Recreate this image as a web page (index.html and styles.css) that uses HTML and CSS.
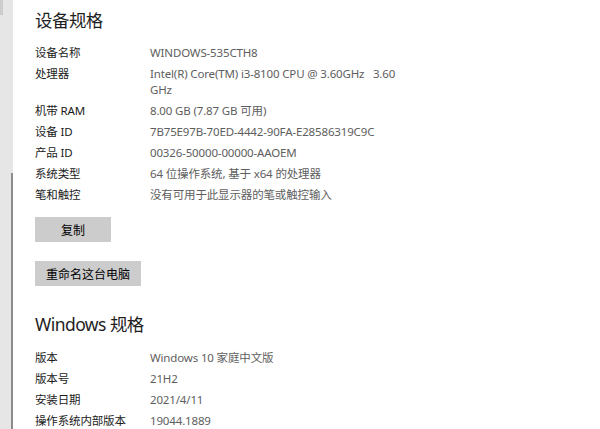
FILE: index.html
```html
<!DOCTYPE html>
<html lang="zh-CN">
<head>
<meta charset="utf-8">
<title>关于</title>
<link rel="stylesheet" href="styles.css">
</head>
<body>
<div class="page">
	<aside class="rail">
		<span class="rail-thumb"></span>
		<span class="rail-line"></span>
	</aside>
	<main class="content">
		<h2>设备规格</h2>
		<dl class="specs">
			<dt>设备名称</dt><dd>WINDOWS-535CTH8</dd>
			<dt>处理器</dt><dd>Intel(R) Core(TM) i3-8100 CPU @ 3.60GHz&nbsp;&nbsp; 3.60 GHz</dd>
			<dt>机带 RAM</dt><dd>8.00 GB (7.87 GB 可用)</dd>
			<dt>设备 ID</dt><dd>7B75E97B-70ED-4442-90FA-E28586319C9C</dd>
			<dt>产品 ID</dt><dd>00326-50000-00000-AAOEM</dd>
			<dt>系统类型</dt><dd>64 位操作系统, 基于 x64 的处理器</dd>
			<dt>笔和触控</dt><dd>没有可用于此显示器的笔或触控输入</dd>
		</dl>
		<button class="btn btn-copy">复制</button>
		<button class="btn">重命名这台电脑</button>
		<h2 class="second">Windows 规格</h2>
		<dl class="specs">
			<dt>版本</dt><dd>Windows 10 家庭中文版</dd>
			<dt>版本号</dt><dd>21H2</dd>
			<dt>安装日期</dt><dd>2021/4/11</dd>
			<dt>操作系统内部版本</dt><dd>19044.1889</dd>
		</dl>
	</main>
</div>
</body>
</html>
```

FILE: styles.css
```css
html, body {
	margin: 0;
	padding: 0;
	background: #fff;
	height: 100%;
	overflow: hidden;
}
body {
	font-family: "Noto Sans", "Noto Sans CJK SC", sans-serif;
	color: #1b1b1b;
}
.page {
	display: flex;
	height: 100%;
}
.rail {
	width: 13px;
	flex-shrink: 0;
	background: #e6e6e6;
	display: flex;
	flex-direction: column;
}
.rail-thumb {
	width: 3px;
	height: 15px;
	background: #cdcdcd;
}
.rail-line {
	margin-top: auto;
	margin-left: 11px;
	width: 2px;
	height: 256px;
	background: #8c8c8c;
}
.content {
	padding: 8px 0 0 22px;
	display: flex;
	flex-direction: column;
	align-items: flex-start;
}
h2 {
	margin: 0 0 13px 0;
	font-size: 17.5px;
	letter-spacing: -0.55px;
	line-height: 24px;
	font-weight: normal;
	color: #1e1e1e;
}
h2.second {
	margin-top: 26px;
	margin-bottom: 14px;
}
.specs {
	display: grid;
	grid-template-columns: 115px 252px;
	row-gap: 5px;
	margin: 0;
	font-size: 11.5px;
	letter-spacing: -0.15px;
	line-height: 16px;
}
dt, dd {
	margin: 0;
}
dd {
	color: #5e5e5e;
}
.btn {
	font-family: inherit;
	font-size: 12px;
	color: #000;
	background: #cccccc;
	border: 0;
	height: 26px;
	padding: 0 11px;
	margin-top: 19px;
}
.btn-copy {
	margin-top: 14px;
	min-width: 76px;
}
```
